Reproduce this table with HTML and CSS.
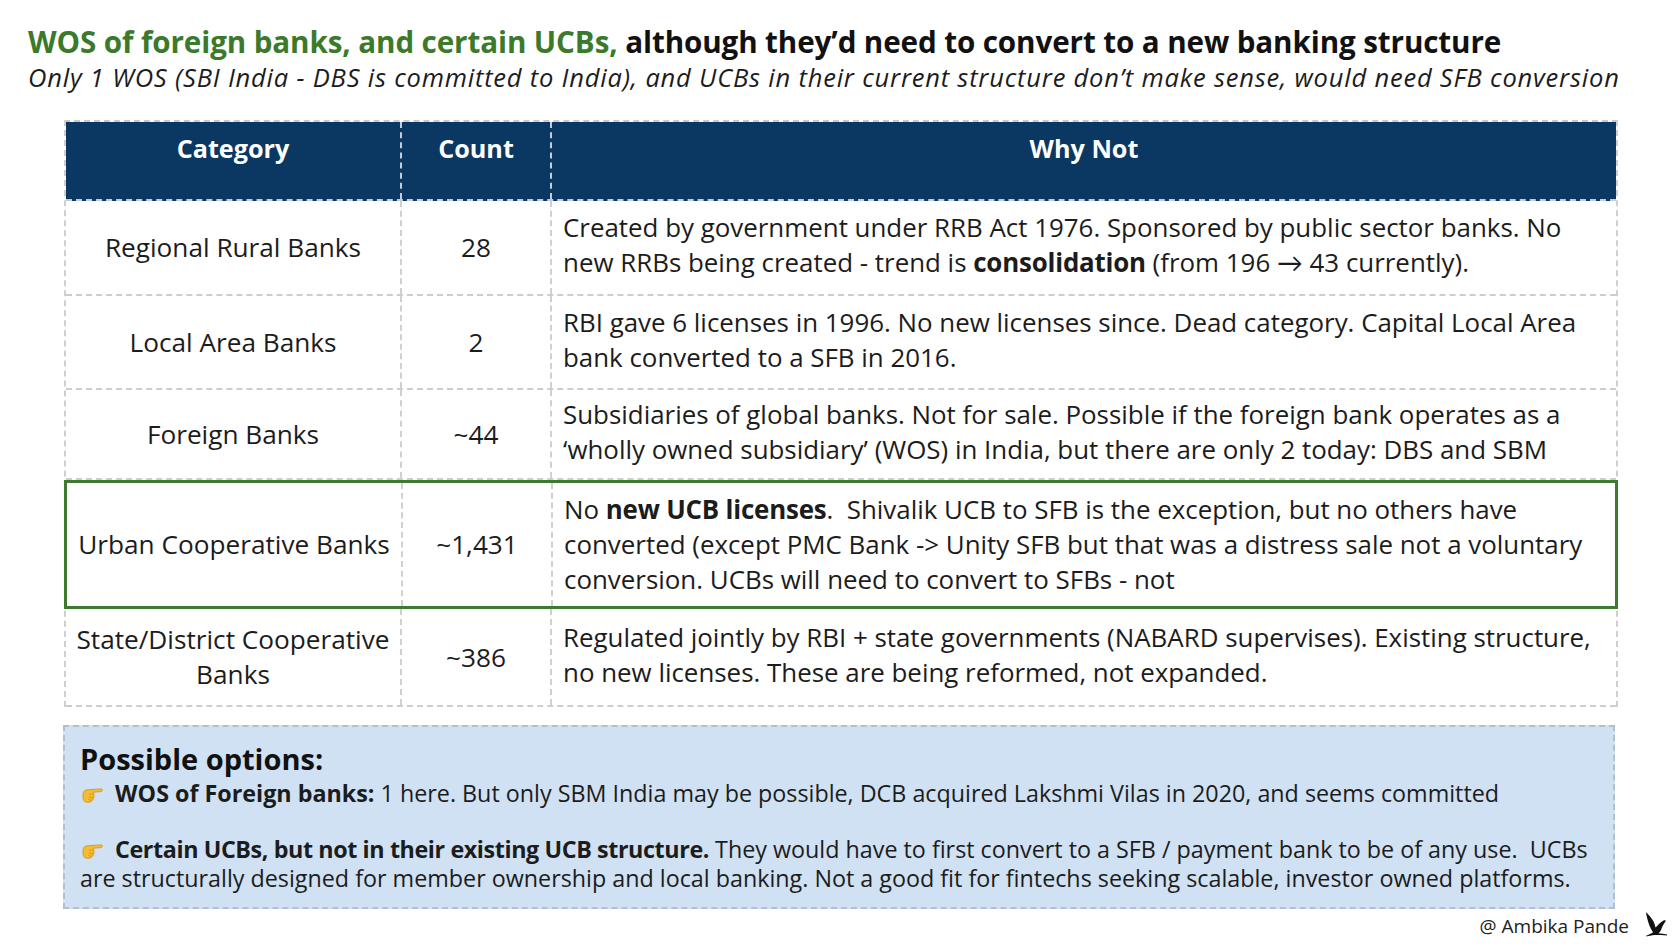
FILE: index.html
```html
<!DOCTYPE html>
<html>
<head>
<meta charset="utf-8">
<link rel="stylesheet" href="styles.css">
</head>
<body>
<div class="page">
  <h1 class="title"><span class="green">WOS of foreign banks, and certain UCBs,</span> although they’d need to convert to a new banking structure</h1>
  <p class="subtitle">Only 1 WOS (SBI India - DBS is committed to India), and UCBs in their current structure don’t make sense, would need SFB conversion</p>

  <div class="table">
    <div class="row head">
      <div class="cell c1">Category</div>
      <div class="cell c2">Count</div>
      <div class="cell c3">Why Not</div>
    </div>
    <div class="row r1">
      <div class="cell c1">Regional Rural Banks</div>
      <div class="cell c2">28</div>
      <div class="cell c3">Created by government under RRB Act 1976. Sponsored by public sector banks. No<br>new RRBs being created - trend is <b>consolidation</b> (from 196 → 43 currently).</div>
    </div>
    <div class="row r2">
      <div class="cell c1">Local Area Banks</div>
      <div class="cell c2">2</div>
      <div class="cell c3">RBI gave 6 licenses in 1996. No new licenses since. Dead category. Capital Local Area<br>bank converted to a SFB in 2016.</div>
    </div>
    <div class="row r3">
      <div class="cell c1">Foreign Banks</div>
      <div class="cell c2">~44</div>
      <div class="cell c3">Subsidiaries of global banks. Not for sale. Possible if the foreign bank operates as a<br>‘wholly owned subsidiary’ (WOS) in India, but there are only 2 today: DBS and SBM</div>
    </div>
    <div class="row r4 highlight">
      <div class="cell c1">Urban Cooperative Banks</div>
      <div class="cell c2">~1,431</div>
      <div class="cell c3">No <b>new UCB licenses</b>.&nbsp; Shivalik UCB to SFB is the exception, but no others have<br>converted (except PMC Bank -&gt; Unity SFB but that was a distress sale not a voluntary<br>conversion. UCBs will need to convert to SFBs - not</div>
    </div>
    <div class="row r5">
      <div class="cell c1">State/District Cooperative<br>Banks</div>
      <div class="cell c2">~386</div>
      <div class="cell c3">Regulated jointly by RBI + state governments (NABARD supervises). Existing structure,<br>no new licenses. These are being reformed, not expanded.</div>
    </div>
  </div>

  <div class="options">
    <h2 class="opt-title">Possible options:</h2>
    <p class="opt-line"><svg class="hand" viewBox="0 0 26 20" width="24" height="18"><path d="M3 9 C3 5 7 4 10 4 L23 3.2 C25 3.1 25 6 23 6.2 L14 7 C15 8 15.5 9 15 10.5 C16 11.5 15.5 13 14.5 13.3 C15 14.6 14 16 12.5 16 C12.5 17.3 11.5 18 10 18 L7 18 C4 18 3 15 3 12 Z" fill="#f5bd2e" stroke="#d08a14" stroke-width="0.8"/><path d="M10 8.5 L14.5 9.6 M9.5 12 L14.2 13 M9 15 L12.6 15.8" stroke="#d08a14" stroke-width="0.8" fill="none"/></svg> <b>WOS of Foreign banks:</b> 1 here. But only SBM India may be possible, DCB acquired Lakshmi Vilas in 2020, and seems committed</p>
    <p class="opt-gap"></p>
    <p class="opt-line"><svg class="hand" viewBox="0 0 26 20" width="24" height="18"><path d="M3 9 C3 5 7 4 10 4 L23 3.2 C25 3.1 25 6 23 6.2 L14 7 C15 8 15.5 9 15 10.5 C16 11.5 15.5 13 14.5 13.3 C15 14.6 14 16 12.5 16 C12.5 17.3 11.5 18 10 18 L7 18 C4 18 3 15 3 12 Z" fill="#f5bd2e" stroke="#d08a14" stroke-width="0.8"/><path d="M10 8.5 L14.5 9.6 M9.5 12 L14.2 13 M9 15 L12.6 15.8" stroke="#d08a14" stroke-width="0.8" fill="none"/></svg> <b class="tight">Certain UCBs, but not in their existing UCB structure.</b> They would have to first convert to a SFB / payment bank to be of any use.&nbsp; UCBs</p>
    <p class="opt-line">are structurally designed for member ownership and local banking. Not a good fit for fintechs seeking scalable, investor owned platforms.</p>
  </div>

  <div class="footer">
    <span class="author">@ Ambika Pande</span>
    <svg class="bird" viewBox="0 0 26 28" width="25" height="27"><path d="M3 1 C6 4 9 7 11 11 C12 13 12.5 15 13 17 C15 15 18 12 21 10 C22.5 9.3 24 9.5 23.5 10.5 C21.5 13 20 16 19 19 C18.3 21 17.3 22.3 16 23 C19 23.3 22 23.6 25 24.5 L25 25.5 C21 25.2 16 25 12 25 C9 25.3 6 26 3.5 26.5 L3.5 25.5 C6 24.5 8.5 23.5 10.5 22 C9 20 7.5 17.5 6.5 14.5 C5 10.5 3.8 6 3 1 Z" fill="#111"/></svg>
  </div>
</div>
</body>
</html>
```

FILE: styles.css
```css
html, body {
  margin: 0;
  padding: 0;
  background: #ffffff;
}
body {
  font-family: "Open Sans", Lato, "Noto Sans", Arial, sans-serif;
  color: #1c1c1c;
}
.page {
  width: 1674px;
  height: 946px;
  padding: 22px 0 0 28px;
  box-sizing: border-box;
}
.title {
  margin: 0;
  font-size: 29.6px;
  line-height: 40px;
  font-weight: 700;
  color: #111;
  white-space: nowrap;
  letter-spacing: -0.1px;
}
.green {
  color: #3c7a2b;
}
.subtitle {
  margin: 0;
  font-size: 25.5px;
  line-height: 30px;
  font-style: italic;
  color: #1c1c1c;
  white-space: nowrap;
  letter-spacing: 0.8px;
}
.table {
  width: 1554px;
  margin: 28px 0 0 36px;
  border-top: 2px dashed #c9c9c9;
  border-left: 2px dashed #cfcfcf;
  border-right: 2px dashed #cfcfcf;
  box-sizing: border-box;
}
.row {
  display: grid;
  grid-template-columns: 336px 150px 1fr;
  border-bottom: 2px dashed #cdcdcd;
  box-sizing: border-box;
}
.cell {
  font-size: 25.9px;
  line-height: 35px;
  padding: 9px 0 9px;
  border-right: 2px dashed #d0d0d0;
}
.cell.c3 {
  border-right: none;
  padding-left: 11px;
  white-space: nowrap;
}
.cell.c1, .cell.c2 {
  display: flex;
  align-items: center;
  justify-content: center;
  text-align: center;
  font-size: 26.2px;
}
.cell b {
  font-weight: 700;
  letter-spacing: -0.2px;
}
.head {
  background: #0b3763;
  height: 79px;
  border-bottom: 2px dashed #c6ccd4;
}
.head .cell {
  color: #ffffff;
  font-weight: 700;
  font-size: 25.2px;
  padding: 0;
  height: 77px;
  line-height: 52px;
  border-right: 2px dashed #c6ccd4;
  display: block;
  text-align: center;
}
.head .cell.c3 {
  border-right: none;
  padding-left: 0;
}
.r1 { height: 95px; }
.r2 { height: 94px; }
.r3 { height: 90px; }
.r3 .cell.c3 { padding-top: 7px; }
.r4 { height: 129px; }
.r5 { height: 98px; }
.r5 .cell.c3 { padding-top: 11px; }
.highlight {
  margin: 0 -2px;
  border: 3px solid #3d7a2b;
}
.highlight .cell {
  padding-top: 9px;
}
.options {
  width: 1552px;
  height: 184px;
  margin: 18px 0 0 35px;
  box-sizing: border-box;
  background: #cfe1f2;
  border: 2px dashed #b5bfc8;
  padding: 12px 0 0 15px;
}
.opt-title {
  margin: 0;
  font-size: 29px;
  line-height: 40px;
  font-weight: 700;
  color: #111;
}
.opt-line {
  margin: 0;
  font-size: 23.3px;
  line-height: 29px;
  white-space: nowrap;
  color: #1c1c1c;
}
.opt-line b {
  font-weight: 700;
}
.opt-line b.tight {
  letter-spacing: -0.4px;
}
.opt-gap {
  margin: 0;
  height: 27px;
}
.hand {
  vertical-align: -2px;
  margin-right: 5px;
}
.footer {
  display: flex;
  justify-content: flex-end;
  align-items: flex-end;
  gap: 14px;
  padding-right: 6px;
  margin-top: 2px;
}
.author {
  font-size: 19px;
  line-height: 24px;
  color: #222;
}
.bird {
  display: block;
}
```
